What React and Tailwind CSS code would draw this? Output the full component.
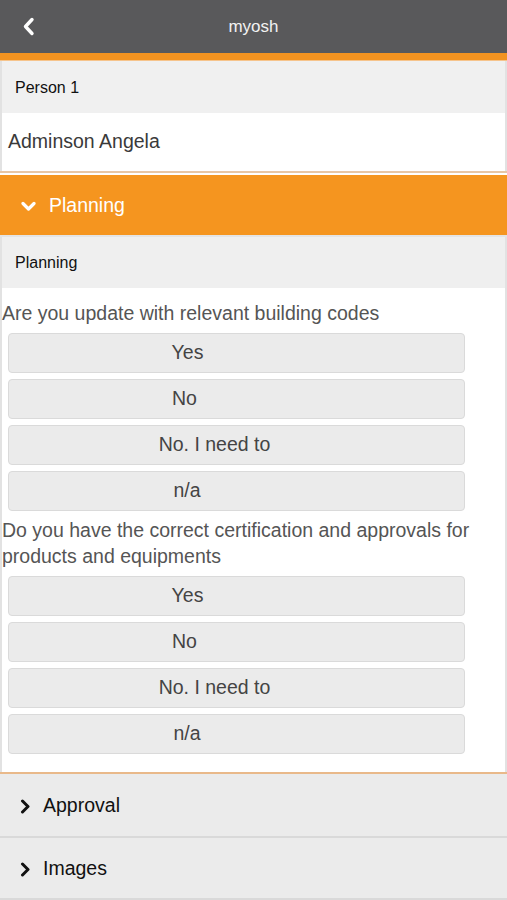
import React from "react";

const options = [
  { label: "Yes", cls: "pr-[98px]" },
  { label: "No", cls: "pr-[104px]" },
  { label: "No. I need to", cls: "pr-[44px]" },
  { label: "n/a", cls: "pr-[99px]" },
];

function OptionButton({ label, cls }) {
  return (
    <div
      className={`ml-[6px] w-[457px] h-[40px] flex items-center justify-center rounded-[4px] border border-[#dadada] bg-[#ebebeb] text-[19.5px] text-[#444] ${cls}`}
    >
      {label}
    </div>
  );
}

function ChevronDown() {
  return (
    <svg width="15" height="11" viewBox="0 0 15 11" fill="none">
      <path d="M2 2.5 L7.5 8 L13 2.5" stroke="white" strokeWidth="3.2" strokeLinecap="round" strokeLinejoin="round" />
    </svg>
  );
}

function ChevronRight() {
  return (
    <svg width="11" height="15" viewBox="0 0 11 15" fill="none">
      <path d="M2.5 2 L8 7.5 L2.5 13" stroke="#111" strokeWidth="3" strokeLinecap="round" strokeLinejoin="round" />
    </svg>
  );
}

function BackChevron() {
  return (
    <svg width="13" height="19" viewBox="0 0 13 19" fill="none">
      <path d="M10 2.5 L3.5 9.5 L10 16.5" stroke="white" strokeWidth="3.4" strokeLinecap="round" strokeLinejoin="round" />
    </svg>
  );
}

export default function App() {
  return (
    <div
      className="w-[507px] h-[900px] overflow-hidden bg-white flex flex-col"
      style={{ fontFamily: '"Liberation Sans", Arial, sans-serif' }}
    >
      {/* Header */}
      <div className="h-[53px] shrink-0 bg-[#59595b] flex items-center relative">
        <div className="absolute left-[22px] top-[17px]">
          <BackChevron />
        </div>
        <div className="flex-1 text-center text-[17px] text-[#f2f2f2]">myosh</div>
      </div>
      <div className="h-[7px] shrink-0 bg-[#f39320]" />
      <div className="h-[1px] shrink-0 bg-[#f6c48c]" />

      {/* Person section */}
      <div className="border-x-2 border-[#e2e2e2] flex flex-col shrink-0">
        <div className="h-[52px] bg-[#f0f0f0] flex items-center pl-[13px] pt-[2px] text-[16px] text-[#111]">
          Person 1
        </div>
        <div className="h-[58px] bg-white flex items-center pl-[6px] text-[19.5px] text-[#3a3a3a]">
          Adminson Angela
        </div>
      </div>
      <div className="h-[2px] shrink-0 bg-[#e8c6a4]" />
      <div className="h-[2px] shrink-0 bg-white" />

      {/* Planning accordion header */}
      <div className="h-[60px] shrink-0 bg-[#f5951f] flex items-center pl-[21px] pt-[2px] gap-[13px]">
        <ChevronDown />
        <span className="text-[19.5px] text-white">Planning</span>
      </div>
      <div className="h-[2px] shrink-0 bg-[#e4e4e4]" />

      {/* Planning body */}
      <div className="border-x-2 border-[#e2e2e2] flex flex-col shrink-0">
        <div className="h-[51px] bg-[#efefef] flex items-center pl-[13px] text-[16px] text-[#111]">
          Planning
        </div>
        <div className="pt-[12px] text-[19.5px] leading-[26px] text-[#555]">
          Are you update with relevant building codes
        </div>
        <div className="flex flex-col gap-[6px] mt-[7px]">
          {options.map((o) => (
            <OptionButton key={"a" + o.label} label={o.label} cls={o.cls} />
          ))}
        </div>
        <div className="pt-[6px] text-[19.5px] leading-[26px] text-[#555] pr-[20px]">
          Do you have the correct certification and approvals for products and equipments
        </div>
        <div className="flex flex-col gap-[6px] mt-[7px]">
          {options.map((o) => (
            <OptionButton key={"b" + o.label} label={o.label} cls={o.cls} />
          ))}
        </div>
        <div className="h-[18px]" />
      </div>
      <div className="h-[2px] shrink-0 bg-[#e9b98a]" />

      {/* Collapsed sections */}
      <div className="h-[62px] shrink-0 bg-[#ebebeb] flex items-center pl-[20px] pt-[2px] gap-[12px]">
        <ChevronRight />
        <span className="text-[19.5px] text-[#111]">Approval</span>
      </div>
      <div className="h-[2px] shrink-0 bg-[#d9d9d9]" />
      <div className="h-[60px] shrink-0 bg-[#ebebeb] flex items-center pl-[20px] pt-[2px] gap-[12px]">
        <ChevronRight />
        <span className="text-[19.5px] text-[#111]">Images</span>
      </div>
      <div className="h-[2px] shrink-0 bg-[#d9d9d9]" />
    </div>
  );
}
